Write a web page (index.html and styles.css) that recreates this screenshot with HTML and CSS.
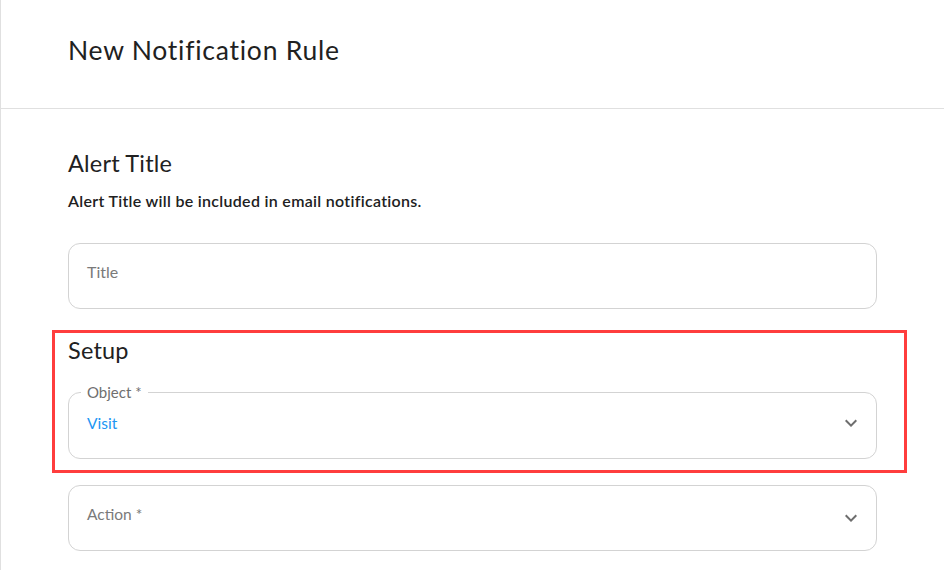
FILE: index.html
```html
<!DOCTYPE html>
<html lang="en">
<head>
<meta charset="utf-8">
<title>New Notification Rule</title>
<link rel="stylesheet" href="styles.css">
</head>
<body>
<div class="page">
  <header class="page-header">
    <h1 class="page-title">New Notification Rule</h1>
  </header>
  <main class="content">
    <section class="section">
      <h2 class="section-title">Alert Title</h2>
      <p class="section-desc">Alert Title will be included in email notifications.</p>
      <div class="field field-title">
        <span class="placeholder">Title</span>
      </div>
    </section>
    <section class="section setup">
      <h2 class="section-title setup-title">Setup</h2>
      <fieldset class="select-field">
        <legend class="select-legend">Object *</legend>
        <div class="select-row">
          <span class="select-value">Visit</span>
          <svg class="chevron" viewBox="0 0 24 24" width="24" height="24"><path d="M16.59 8.59 12 13.17 7.41 8.59 6 10l6 6 6-6z"/></svg>
        </div>
      </fieldset>
      <div class="highlight"></div>
    </section>
    <div class="field field-action">
      <span class="placeholder">Action *</span>
      <svg class="chevron" viewBox="0 0 24 24" width="24" height="24"><path d="M16.59 8.59 12 13.17 7.41 8.59 6 10l6 6 6-6z"/></svg>
    </div>
  </main>
</div>
</body>
</html>
```
FILE: styles.css
```css
* { box-sizing: border-box; }
html, body {
  margin: 0;
  padding: 0;
  background: #fff;
}
body {
  font-family: "Lato", "Noto Sans", sans-serif;
  color: #212121;
  width: 944px;
  height: 570px;
  overflow: hidden;
}
.page {
  border-left: 1px solid #e0e0e0;
  min-height: 570px;
}
.page-header {
  height: 109px;
  border-bottom: 1px solid #e0e0e0;
  padding: 35px 0 0 67px;
}
.page-title {
  margin: 0;
  font-size: 26.5px;
  line-height: 30px;
  font-weight: 400;
  letter-spacing: 0.75px;
  color: #212121;
}
.content {
  padding: 0 67px 0 67px;
}
.section-title {
  margin: 40px 0 0;
  font-size: 23.5px;
  line-height: 28px;
  font-weight: 400;
  letter-spacing: 0.2px;
  color: #212121;
}
.section-desc {
  margin: 14px 0 0;
  font-size: 16px;
  line-height: 20px;
  font-weight: 600;
  letter-spacing: 0.3px;
  color: #212121;
}
.field {
  height: 66px;
  border: 1px solid #d3d3d3;
  border-radius: 12px;
  display: flex;
  align-items: center;
  justify-content: space-between;
  padding: 0 13px 0 18px;
}
.field-title { margin-top: 32px; }
.field-action { margin-top: 26px; }
.placeholder {
  font-size: 16px;
  line-height: 20px;
  color: #7a7a7a;
  padding-bottom: 9px;
}
.field-action .placeholder {
  font-size: 15.5px;
  padding-bottom: 9px;
}
.setup {
  position: relative;
}
.setup-title { margin-top: 27px; }
.select-field {
  margin: 19px 0 0;
  min-width: 0;
  border: 1px solid #d3d3d3;
  border-radius: 12px;
  padding: 12px 13px 25px 12px;
}
.select-legend {
  font-size: 15px;
  line-height: 18px;
  color: #6f6f6f;
  padding: 0 6px;
}
.select-row {
  display: flex;
  align-items: center;
  justify-content: space-between;
  padding-left: 6px;
  height: 20px;
}
.select-value {
  font-size: 15.5px;
  line-height: 20px;
  color: #2196f3;
}
.chevron {
  fill: #6e6e6e;
  flex: none;
}
.highlight {
  position: absolute;
  left: -16px;
  right: -30px;
  top: -6px;
  bottom: -14px;
  border: 3px solid #ff3d3d;
  pointer-events: none;
}
```
